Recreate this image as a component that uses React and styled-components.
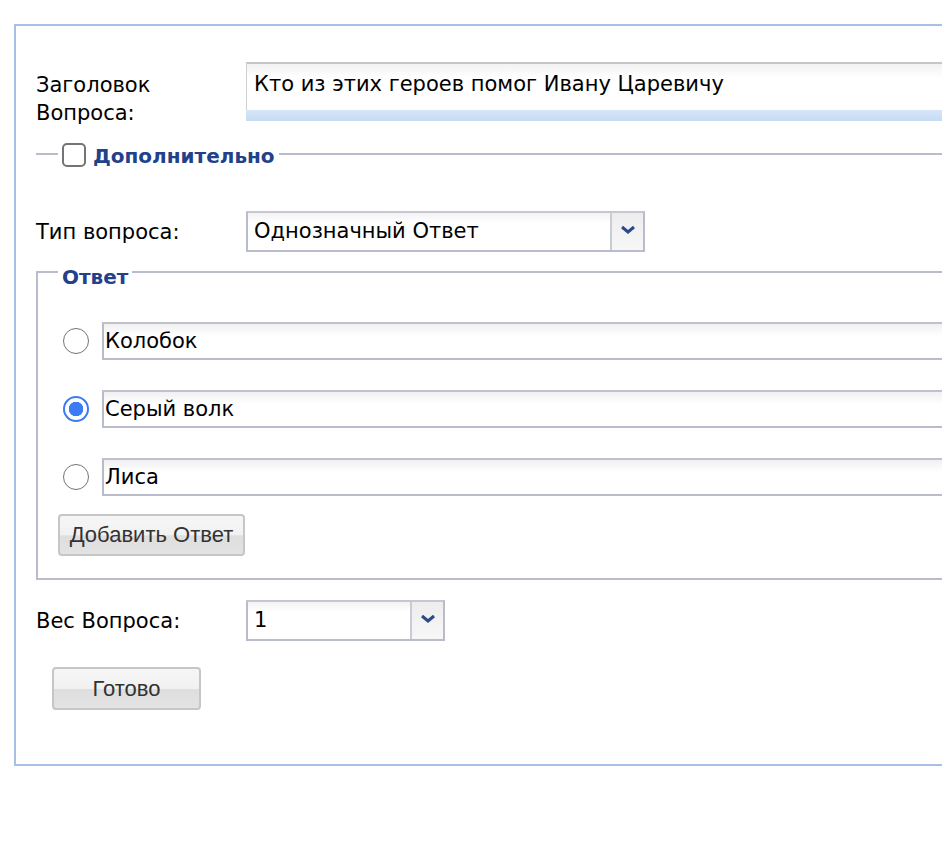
import styled, { createGlobalStyle } from "styled-components";

const GlobalStyle = createGlobalStyle`
  html, body {
    margin: 0;
    padding: 0;
    background: #fff;
    overflow: hidden;
  }
  body {
    font-family: "DejaVu Sans", Verdana, sans-serif;
    color: #000;
  }
`;

const answers = [
  { id: 1, text: "Колобок", checked: false },
  { id: 2, text: "Серый волк", checked: true },
  { id: 3, text: "Лиса", checked: false },
];

const ChevronIcon = () => (
  <svg width="16" height="10" viewBox="0 0 16 10">
    <path d="M2 2 L8 7 L14 2" fill="none" stroke="#2b4a86" strokeWidth="3" />
  </svg>
);

const App = () => {
  return (
    <Page>
      <GlobalStyle />
      <Panel>
        <TitleRow>
          <Label>
            Заголовок
            <br />
            Вопроса:
          </Label>
          <TitleField>
            <TitleInput>Кто из этих героев помог Ивану Царевичу</TitleInput>
            <TitleBand />
          </TitleField>
        </TitleRow>

        <ExtraSet>
          <ExtraLegend>
            <Checkbox />
            <LegendText>Дополнительно</LegendText>
          </ExtraLegend>
        </ExtraSet>

        <FieldRow $top={56}>
          <Label>Тип вопроса:</Label>
          <Select $width={399}>
            <SelectValue>Однозначный Ответ</SelectValue>
            <SelectArrow>
              <ChevronIcon />
            </SelectArrow>
          </Select>
        </FieldRow>

        <AnswerSet>
          <AnswerLegend>
            <LegendText>Ответ</LegendText>
          </AnswerLegend>
          <AnswerList>
            {answers.map((a) => (
              <AnswerRow key={a.id}>
                <Radio $checked={a.checked} />
                <AnswerInput>{a.text}</AnswerInput>
              </AnswerRow>
            ))}
          </AnswerList>
          <Button $width={187}>Добавить Ответ</Button>
        </AnswerSet>

        <FieldRow $top={20}>
          <Label>Вес Вопроса:</Label>
          <Select $width={199}>
            <SelectValue>1</SelectValue>
            <SelectArrow>
              <ChevronIcon />
            </SelectArrow>
          </Select>
        </FieldRow>

        <DoneRow>
          <Button $width={149} $height={43}>
            Готово
          </Button>
        </DoneRow>
      </Panel>
    </Page>
  );
};

export default App;

const Page = styled.div`
  padding: 24px 0 0 14px;
`;

const Panel = styled.div`
  width: 1100px;
  height: 742px;
  box-sizing: border-box;
  border: 2px solid #a7c0e8;
  border-right: none;
  padding: 36px 0 0 20px;
`;

const Label = styled.div`
  width: 210px;
  font-size: 21px;
  line-height: 28px;
  flex-shrink: 0;
`;

const TitleRow = styled.div`
  display: flex;
  align-items: flex-start;
  & > ${Label} {
    padding-top: 9px;
  }
`;

const TitleField = styled.div`
  flex: 1;
`;

const TitleInput = styled.div`
  height: 48px;
  box-sizing: border-box;
  border-top: 2px solid #c6c6c6;
  border-left: 1px solid #cfcfcf;
  background: linear-gradient(#f2f2f2, #fff 14px);
  padding: 5px 7px;
  font-size: 21px;
  line-height: 30px;
`;

const TitleBand = styled.div`
  height: 11px;
  background: linear-gradient(#d7e6f8, #c6dbf4);
`;

const ExtraSet = styled.div`
  margin-top: 26px;
  height: 2px;
  background: #b9bccb;
  position: relative;
`;

const ExtraLegend = styled.div`
  position: absolute;
  left: 22px;
  top: -12px;
  display: flex;
  align-items: center;
  gap: 7px;
  padding: 0 4px;
  background: #fff;
  & > span:last-child {
    padding-top: 3px;
  }
`;

const Checkbox = styled.span`
  width: 20px;
  height: 20px;
  border: 2px solid #747474;
  border-radius: 5px;
  background: #fff;
`;

const LegendText = styled.span`
  font-size: 20px;
  font-weight: bold;
  color: #22418a;
  line-height: 24px;
`;

const FieldRow = styled.div`
  display: flex;
  align-items: center;
  margin-top: ${(p) => p.$top}px;
`;

const Select = styled.div`
  width: ${(p) => p.$width}px;
  height: 41px;
  box-sizing: border-box;
  border: 2px solid #b9bccb;
  border-top-color: #c5c7d2;
  display: flex;
  background: linear-gradient(#f3f3f3, #fff 10px);
`;

const SelectValue = styled.div`
  flex: 1;
  padding: 0 6px;
  font-size: 21px;
  line-height: 37px;
`;

const SelectArrow = styled.div`
  width: 33px;
  border-left: 2px solid #c9cbd5;
  display: flex;
  align-items: center;
  justify-content: center;
  background: linear-gradient(#ededed, #f7f7f7);
  padding-bottom: 4px;
  box-sizing: border-box;
`;

const AnswerSet = styled.fieldset`
  margin: 1px 0 0;
  padding: 31px 0 22px 20px;
  border: 2px solid #b9bccb;
  border-right: none;
  min-width: 0;
`;

const AnswerLegend = styled.legend`
  margin: 0;
  padding: 12px 4px 0;
  line-height: 24px;
`;

const AnswerList = styled.div`
  display: flex;
  flex-direction: column;
  gap: 30px;
`;

const AnswerRow = styled.div`
  display: flex;
  align-items: center;
  gap: 13px;
`;

const Radio = styled.span`
  width: 26px;
  height: 26px;
  margin-left: 5px;
  border-radius: 50%;
  box-sizing: border-box;
  border: ${(p) => (p.$checked ? "2px solid #3b7cf5" : "1.5px solid #747474")};
  background: ${(p) =>
    p.$checked
      ? "radial-gradient(circle, #3b7cf5 0 7px, #fff 7.5px)"
      : "#fff"};
  flex-shrink: 0;
`;

const AnswerInput = styled.div`
  flex: 1;
  height: 38px;
  box-sizing: border-box;
  border: 2px solid #b9bccb;
  border-right: none;
  border-top-color: #bfc1cc;
  background: linear-gradient(#f0f0f0, #fff 12px);
  padding: 0 1px;
  font-size: 21px;
  line-height: 35px;
`;

const Button = styled.div`
  width: ${(p) => p.$width}px;
  height: ${(p) => p.$height || 42}px;
  margin-top: 18px;
  box-sizing: border-box;
  border: 2px solid #c6c6c6;
  border-radius: 4px;
  background: linear-gradient(#f6f6f6 0%, #f1f1f1 50%, #dedede 52%, #e3e3e3 100%);
  font-family: "Liberation Sans", Arial, sans-serif;
  font-size: 22px;
  color: #333;
  display: flex;
  align-items: center;
  justify-content: center;
`;

const DoneRow = styled.div`
  padding: 8px 0 0 16px;
`;
